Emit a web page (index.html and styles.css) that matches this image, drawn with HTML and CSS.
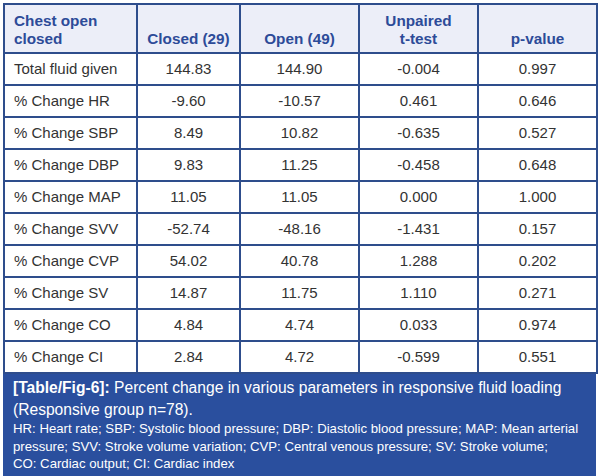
FILE: index.html
```html
<!DOCTYPE html>
<html>
<head>
<meta charset="utf-8">
<link rel="stylesheet" href="styles.css">
</head>
<body>
<div class="figure">
  <table class="data">
    <colgroup>
      <col class="c1"><col class="c2"><col class="c3"><col class="c4"><col class="c5">
    </colgroup>
    <thead>
      <tr>
        <th class="first">Chest open<br>closed</th>
        <th>Closed (29)</th>
        <th>Open (49)</th>
        <th>Unpaired<br>t-test</th>
        <th>p-value</th>
      </tr>
    </thead>
    <tbody>
      <tr><td class="first">Total fluid given</td><td>144.83</td><td>144.90</td><td>-0.004</td><td>0.997</td></tr>
      <tr><td class="first">% Change HR</td><td>-9.60</td><td>-10.57</td><td>0.461</td><td>0.646</td></tr>
      <tr><td class="first">% Change SBP</td><td>8.49</td><td>10.82</td><td>-0.635</td><td>0.527</td></tr>
      <tr><td class="first">% Change DBP</td><td>9.83</td><td>11.25</td><td>-0.458</td><td>0.648</td></tr>
      <tr><td class="first">% Change MAP</td><td>11.05</td><td>11.05</td><td>0.000</td><td>1.000</td></tr>
      <tr><td class="first">% Change SVV</td><td>-52.74</td><td>-48.16</td><td>-1.431</td><td>0.157</td></tr>
      <tr><td class="first">% Change CVP</td><td>54.02</td><td>40.78</td><td>1.288</td><td>0.202</td></tr>
      <tr><td class="first">% Change SV</td><td>14.87</td><td>11.75</td><td>1.110</td><td>0.271</td></tr>
      <tr><td class="first">% Change CO</td><td>4.84</td><td>4.74</td><td>0.033</td><td>0.974</td></tr>
      <tr><td class="first">% Change CI</td><td>2.84</td><td>4.72</td><td>-0.599</td><td>0.551</td></tr>
    </tbody>
  </table>
  <div class="caption">
    <p class="title"><b>[Table/Fig-6]:</b> <span>Percent change in various parameters in responsive fluid loading</span> <span>(Responsive group n=78).</span></p>
    <p class="notes"><span>HR: Heart rate; SBP: Systolic blood pressure; DBP: Diastolic blood pressure; MAP: Mean arterial</span> <span>pressure; SVV: Stroke volume variation; CVP: Central venous pressure; SV: Stroke volume;</span><br><span>CO: Cardiac output; CI: Cardiac index</span></p>
  </div>
</div>
</body>
</html>
```
FILE: styles.css
```css
html, body {
  margin: 0;
  padding: 0;
  background: #ffffff;
}
body {
  font-family: "Liberation Sans", Arial, sans-serif;
  color: #333333;
}
.figure {
  width: 593px;
  margin: 3px 0 0 3px;
}
.data {
  width: 593px;
  border-collapse: collapse;
  table-layout: fixed;
  border: 2px solid #2e4d8c;
}
.c1 { width: 133px; }
.c2 { width: 103px; }
.c3 { width: 119px; }
.c4 { width: 119px; }
.c5 { width: 119px; }
.data th, .data td {
  border: 2px solid #2e4d8c;
  font-size: 15px;
  text-align: center;
  padding: 0 6px;
}
.data th {
  background: #eceef8;
  color: #2d4b98;
  font-size: 15.3px;
  font-weight: bold;
  height: 49px;
  line-height: 18px;
  vertical-align: bottom;
  padding-bottom: 4px;
  box-sizing: border-box;
}
.data td {
  height: 30px;
  line-height: 18px;
  font-weight: normal;
}
.data .first {
  text-align: left;
  padding-left: 9px;
}
.caption {
  background: #2a4f9e;
  color: #ffffff;
  padding: 3px 10px 4px 10px;
}
.caption p {
  margin: 0;
}
.title {
  font-size: 15.6px;
  line-height: 21.5px;
}
.notes {
  font-size: 13.2px;
  line-height: 17.5px;
}
```
